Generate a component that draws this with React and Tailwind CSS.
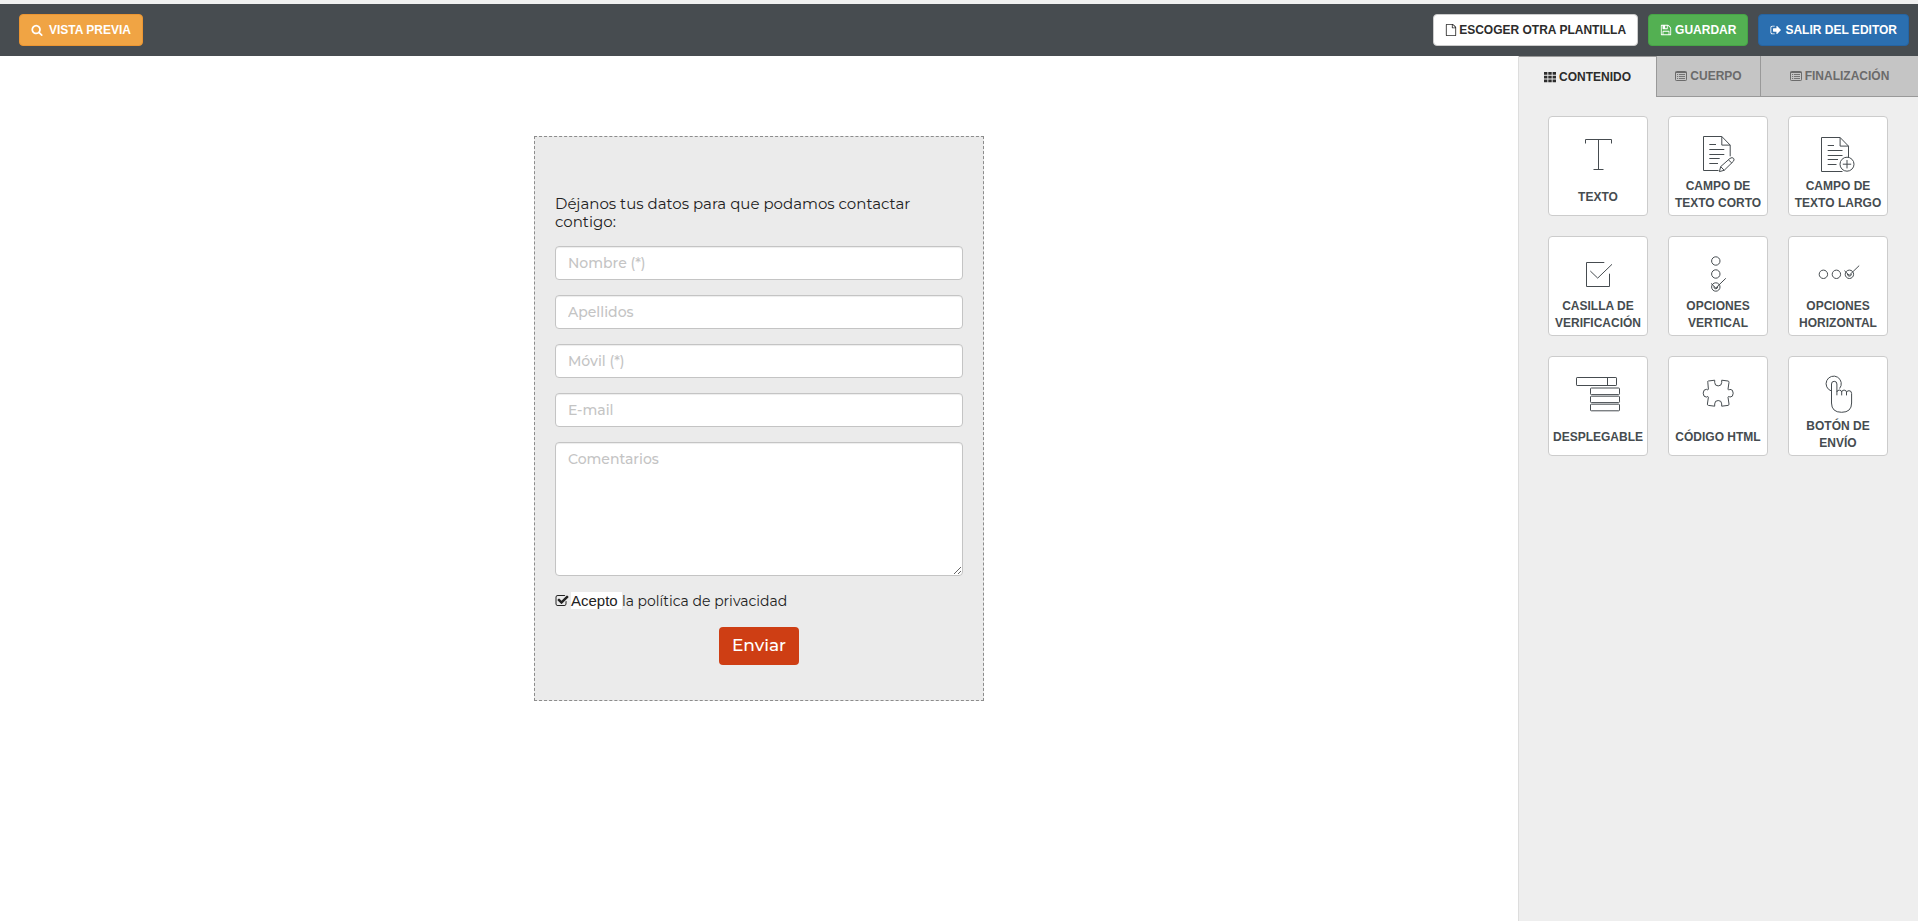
import clsx from 'clsx';

const GLYPHS = {
  search: 'M1216 832q0-185-131.5-316.5t-316.5-131.5-316.5 131.5-131.5 316.5 131.5 316.5 316.5 131.5 316.5-131.5 131.5-316.5zm512 832q0 52-38 90t-90 38q-54 0-90-38l-343-342q-179 124-399 124-143 0-273.5-55.5t-225-150-150-225-55.5-273.5 55.5-273.5 150-225 225-150 273.5-55.5 273.5 55.5 225 150 150 225 55.5 273.5q0 220-124 399l343 343q37 37 37 90z',
  file: 'M1596 380q28 28 48 76t20 88v1152q0 40-28 68t-68 28h-1344q-40 0-68-28t-28-68v-1600q0-40 28-68t68-28h896q40 0 88 20t76 48zm-444-244v376h376q-10-29-22-41l-313-313q-12-12-41-22zm384 1528v-1024h-416q-40 0-68-28t-28-68v-416h-768v1536h1280z',
  save: 'M512 1536h768v-384h-768v384zm896 0h128v-896q0-14-10-38.5t-20-34.5l-281-281q-10-10-34-20t-39-10v416q0 40-28 68t-68 28h-576q-40 0-68-28t-28-68v-416h-128v1280h128v-416q0-40 28-68t68-28h832q40 0 68 28t28 68v416zm-384-928v-320q0-13-9.5-22.5t-22.5-9.5h-192q-13 0-22.5 9.5t-9.5 22.5v320q0 13 9.5 22.5t22.5 9.5h192q13 0 22.5-9.5t9.5-22.5zm640 32v928q0 40-28 68t-68 28h-1344q-40 0-68-28t-28-68v-1344q0-40 28-68t68-28h928q40 0 88 20t76 48l280 280q28 28 48 76t20 88z',
  exit: 'M704 1440q0 4 1 20t.5 26.5-3 23.5-10 19.5-20.5 6.5h-320q-119 0-203.5-84.5t-84.5-203.5v-704q0-119 84.5-203.5t203.5-84.5h320q13 0 22.5 9.5t9.5 22.5q0 4 1 20t.5 26.5-3 23.5-10 19.5-20.5 6.5h-320q-66 0-113 47t-47 113v704q0 66 47 113t113 47h312l11.5 1 11.5 3 8 5.5 7 9 2 13.5zm928-544q0 26-19 45l-544 544q-19 19-45 19t-45-19-19-45v-288h-448q-26 0-45-19t-19-45v-384q0-26 19-45t45-19h448v-288q0-26 19-45t45-19 45 19l544 544q19 19 19 45z',
  check: 'M1472 930v318q0 119-84.5 203.5t-203.5 84.5h-832q-119 0-203.5-84.5t-84.5-203.5v-832q0-119 84.5-203.5t203.5-84.5h832q63 0 117 25 15 7 18 23 3 17-9 29l-49 49q-10 10-23 10-3 0-9-2-23-6-45-6h-832q-66 0-113 47t-47 113v832q0 66 47 113t113 47h832q66 0 113-47t47-113v-254q0-13 9-22l64-64q10-10 23-10 6 0 12 3 20 8 20 29zm231-489l-814 814q-24 24-57 24t-57-24l-430-430q-24-24-24-57t24-57l110-110q24-24 57-24t57 24l263 263 647-647q24-24 57-24t57 24l110 110q24 24 24 57t-24 57z',
};

function Glyph({ name, className }) {
  return (
    <svg viewBox="0 0 1792 1792" fill="currentColor" className={clsx('shrink-0', className)} aria-hidden="true">
      <path d={GLYPHS[name]} />
    </svg>
  );
}

function GridIcon() {
  return (
    <svg viewBox="0 0 12 12" fill="currentColor" className="size-3 shrink-0" aria-hidden="true">
      <path d="M0 1h3.4v2.8H0zM4.3 1h3.4v2.8H4.3zM8.6 1H12v2.8H8.6zM0 4.7h3.4v2.8H0zM4.3 4.7h3.4v2.8H4.3zM8.6 4.7H12v2.8H8.6zM0 8.4h3.4v2.8H0zM4.3 8.4h3.4v2.8H4.3zM8.6 8.4H12v2.8H8.6z" />
    </svg>
  );
}

function ListIcon() {
  return (
    <svg viewBox="0 0 12 12" className="size-3 shrink-0" aria-hidden="true">
      <rect x="0.5" y="1.5" width="11" height="9" rx="0.8" fill="none" stroke="currentColor" />
      <path d="M0.5 2.5h11" stroke="currentColor" />
      <path d="M2 4.5h1.2M2 6.5h1.2M2 8.5h1.2M4 4.5h6M4 6.5h6M4 8.5h6" stroke="currentColor" strokeWidth="0.9" />
    </svg>
  );
}

const TABS = [
  { title: 'CONTENIDO', icon: GridIcon, active: true, className: 'w-[137px]' },
  { title: 'CUERPO', icon: ListIcon, className: 'w-[104px]' },
  { title: 'FINALIZACIÓN', icon: ListIcon, className: 'flex-1' },
];

const BLOCKS = [
  {
    lines: ['TEXTO'],
    art: <path d="M36.5 26.5v-4h26v4M49.5 22.5v30M44.5 52.5h10" />,
  },
  {
    lines: ['CAMPO DE', 'TEXTO CORTO'],
    art: (
      <>
        <path d="M49.5 53.5h-15v-34h18.3l8.4 8.6v11.2M52.8 19.5v8.6h8.4" />
        <path d="M40.3 27.5h6.7M40.3 32.5h15M40.3 37.5h15M40.3 41.5h10.4M40.3 46.5h8.7" />
        <path d="M50.4 54.6l1.3-5 9.3-8.2q2.3-1.6 3.6 0 1.2 1.4-.4 3.1l-9 8.8zM51.7 49.6l3.5 3.7M59.4 42.8l3.4 3.2" />
      </>
    ),
  },
  {
    lines: ['CAMPO DE', 'TEXTO LARGO'],
    art: (
      <>
        <path d="M53.5 54.5h-21v-34h18.6l8.4 8.6v11M51.1 20.5v8.6h8.4" />
        <path d="M38.7 28.5h6.3M38.7 33.5h14.8M38.7 38.5h14.8M38.7 42.5h10.3M38.7 47.5h8.8" />
        <circle cx="58" cy="47.2" r="7" />
        <path d="M58 43v8.4M53.8 47.2h8.4" />
      </>
    ),
  },
  {
    lines: ['CASILLA DE', 'VERIFICACIÓN'],
    art: <path d="M55.3 25.5H37.5v24h23V36.7M41.3 34l7.4 7.1L63 27.3" />,
  },
  {
    lines: ['OPCIONES', 'VERTICAL'],
    art: (
      <>
        <circle cx="46.8" cy="24" r="4.2" />
        <circle cx="46.8" cy="37" r="4.2" />
        <circle cx="46.8" cy="50" r="4.2" />
        <path d="M42 46.4l4.8 4.6 10-9.7" />
        <path d="M44.8 49.6q.2 2.2 2 2.2t2-2.2" />
      </>
    ),
  },
  {
    lines: ['OPCIONES', 'HORIZONTAL'],
    art: (
      <>
        <circle cx="34.4" cy="37.3" r="4.2" />
        <circle cx="47.4" cy="37.3" r="4.2" />
        <circle cx="60.4" cy="37.3" r="4.2" />
        <path d="M55.4 33.7l4.8 4.6 10-9.7" />
        <path d="M58.4 37q.2 2.2 2 2.2t2-2.2" />
      </>
    ),
  },
  {
    lines: ['DESPLEGABLE'],
    art: (
      <>
        <rect x="27.5" y="20.5" width="40" height="8" rx="0.6" />
        <path d="M58.5 20.5v8" />
        <rect x="41.5" y="31" width="29" height="6.6" rx="0.8" />
        <rect x="41.5" y="39.2" width="29" height="6.4" rx="0.8" />
        <rect x="41.5" y="47.2" width="29" height="6.6" rx="0.8" />
      </>
    ),
  },
  {
    lines: ['CÓDIGO HTML'],
    art: (
      <path d="M38.8 25.2q-.6-.9.6-1.2l6.3-.8v2.3q0 3.4 3.5 3.4t3.5-3.4v-2.3l6.3.8q1.2.3 1 1.3l-1 6.9q.3 1 1.2.6l.8-.5q3.2 0 3.2 3.9t-3.2 3.9l-.8-.5q-.9-.4-1.2.6l1 6.9q.2 1-1 1.3l-6.3.8v-2.3q0-3.4-3.5-3.4t-3.5 3.4v2.3l-6.3-.8q-1.2-.3-1-1.3l1-6.9q-.3-1-1.2-.6l-.8.5q-3.2 0-3.2-3.9t3.2-3.9l.8.5q.9.4 1.2-.6z" />
    ),
  },
  {
    lines: ['BOTÓN DE', 'ENVÍO'],
    art: (
      <>
        <path d="M42.5 34A7.6 7.6 0 1 1 50.6 31.5" />
        <path d="M42.5 46V27q0-2.7 2.7-2.7t2.7 2.7v11.3M47.9 35q.2-1.9 2.4-1.9t2.4 1.9v3.4M52.7 35q.2-1.9 2.4-1.9t2.4 1.9v3.4M57.5 35.6q.2-1.9 2.5-1.9 2.6 0 2.6 2.8V46q0 9.3-10 9.3T42.5 46" />
      </>
    ),
  },
];

const FIELDS = [
  { id: 'nombre', label: 'Nombre (*)', type: 'text' },
  { id: 'apellidos', label: 'Apellidos', type: 'text' },
  { id: 'movil', label: 'Móvil (*)', type: 'tel' },
  { id: 'email', label: 'E-mail', type: 'email' },
];

const CONTROL = 'block w-full rounded border border-[#c4c4c4] bg-white px-3 text-sm text-[#333] shadow-[inset_0_1px_1px_rgba(0,0,0,0.075)] placeholder:font-medium placeholder:text-[#c4c4c4]';

function BarButton({ icon, className, children }) {
  return (
    <button type="button" className={clsx('flex h-8 items-center rounded border px-[11px] text-xs font-bold', className)}>
      <Glyph name={icon} className="size-3" />
      {children}
    </button>
  );
}

function TopBar() {
  return (
    <header className="flex items-center justify-between border-t-4 border-[#f0f0f0] bg-[#474c50] py-[10px] pr-[9px] pl-[19px]">
      <BarButton icon="search" className="gap-[6px] border-[#ec9531] bg-[#f0a444] text-white">VISTA PREVIA</BarButton>
      <div className="flex gap-[10px]">
        <BarButton icon="file" className="gap-[2px] border-[#ccc] bg-white text-[#2c2c2c]">ESCOGER OTRA PLANTILLA</BarButton>
        <BarButton icon="save" className="gap-[3px] border-[#46a546] bg-[#53b052] text-white">GUARDAR</BarButton>
        <BarButton icon="exit" className="gap-[3px] border-[#2564a3] bg-[#2b6fb0] text-white">SALIR DEL EDITOR</BarButton>
      </div>
    </header>
  );
}

function ContactForm() {
  return (
    <form className="flex w-[450px] flex-col gap-[15px] self-start border border-dashed border-[#8c8c8c] bg-[#ebebeb] px-5 pt-[58px] pb-[35px] font-['Montserrat','Inter',sans-serif] text-[#222]">
      <p className="text-[15px] leading-[18px]">Déjanos tus datos para que podamos contactar contigo:</p>
      {FIELDS.map((f) => (
        <input key={f.id} id={f.id} type={f.type} placeholder={f.label} aria-label={f.label} className={clsx(CONTROL, 'h-[34px]')} />
      ))}
      <textarea id="comentarios" placeholder="Comentarios" aria-label="Comentarios" className={clsx(CONTROL, 'h-[134px] resize py-[6px]')} />
      <label className="flex items-center gap-[2px] pt-px pb-[2px] text-sm leading-[18px]">
        <input type="checkbox" defaultChecked className="peer sr-only" />
        <Glyph name="check" className="size-[14px]" />
        <span>
          <span className="bg-white font-['Liberation_Sans',Arial,sans-serif] text-[15px]">Acepto </span>
          la política de privacidad
        </span>
      </label>
      <button type="submit" className="h-[38px] w-20 self-center rounded bg-[#ce3e14] text-[17px] font-medium text-white">
        Enviar
      </button>
    </form>
  );
}

function BlockCard({ lines, art }) {
  return (
    <button type="button" className="flex size-[100px] flex-col items-center rounded border border-[#ccc] bg-white text-xs leading-[17px] font-bold text-[#464c50]">
      <svg viewBox="0 0 98 61" fill="none" stroke="currentColor" className="h-[61px] w-full shrink-0" aria-hidden="true">
        {art}
      </svg>
      <span className={clsx('whitespace-nowrap', lines.length === 1 && 'pt-[11px]')}>
        {lines.map((line) => (
          <span key={line} className="block">{line}</span>
        ))}
      </span>
    </button>
  );
}

function Sidebar() {
  return (
    <aside className="w-[400px] shrink-0 border-l border-[#ddd] bg-[#eee]">
      <div role="tablist" className="flex h-[41px]">
        {TABS.map(({ title, icon: Icon, active, className }) => (
          <button
            key={title}
            type="button"
            role="tab"
            aria-selected={Boolean(active)}
            className={clsx(
              'flex items-center justify-center gap-[3px] text-xs font-bold',
              active ? 'border-t border-[#999] text-[#2c2c2c]' : 'border-b border-l border-[#999] bg-[#c5c5c5] text-[#6b6b6b]',
              className,
            )}
          >
            <Icon />
            {title}
          </button>
        ))}
      </div>
      <div className="grid grid-cols-[repeat(3,100px)] gap-5 pt-[19px] pl-[29px]">
        {BLOCKS.map((b) => (
          <BlockCard key={b.lines.join(' ')} {...b} />
        ))}
      </div>
    </aside>
  );
}

export default function App() {
  return (
    <div className="flex min-h-screen flex-col bg-white font-['Liberation_Sans',Arial,sans-serif]">
      <TopBar />
      <div className="flex flex-1">
        <main className="flex flex-1 justify-center pt-20 pb-10">
          <ContactForm />
        </main>
        <Sidebar />
      </div>
    </div>
  );
}
